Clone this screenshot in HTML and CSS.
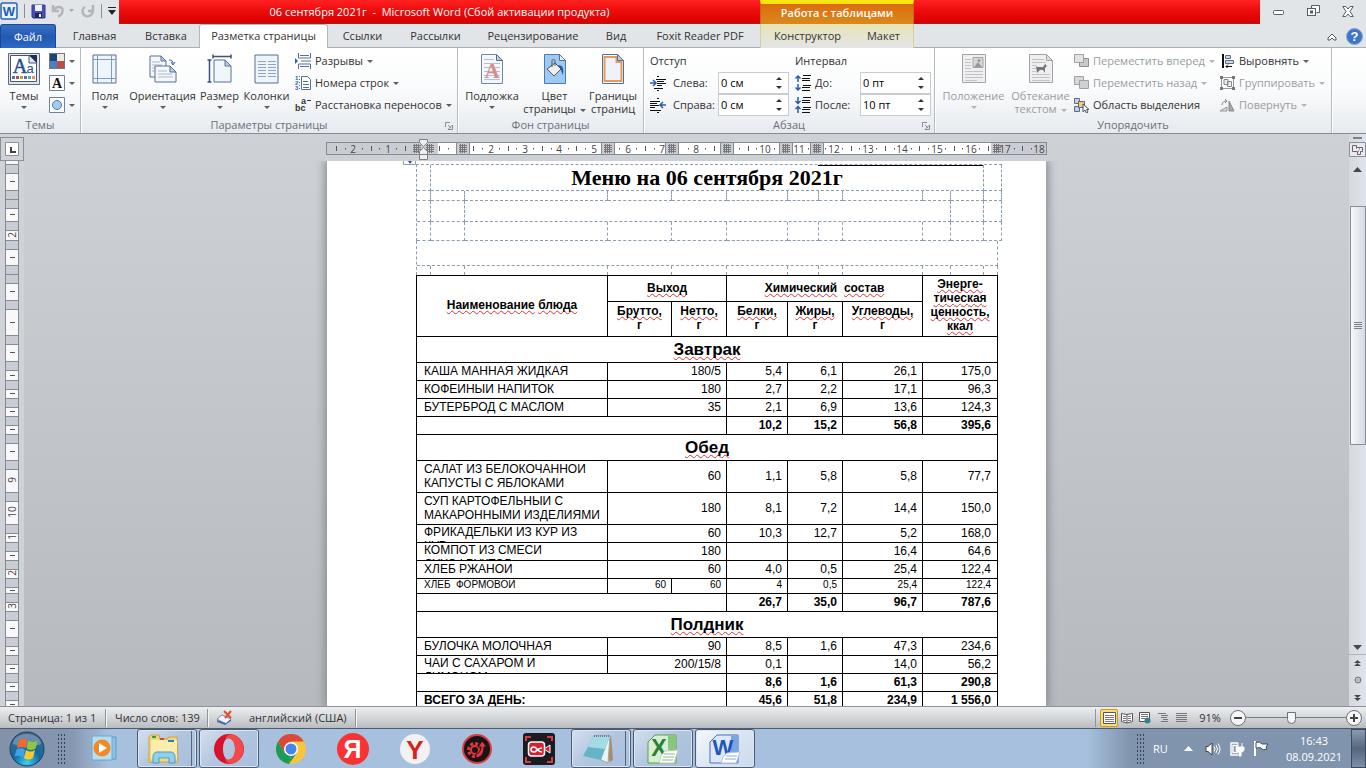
FILE: index.html
```
<!DOCTYPE html>
<html lang="ru">
<head>
  <meta charset="UTF-8">
  <meta name="viewport" content="width=device-width, initial-scale=1.0">
  <title>06 сентября 2021г - Microsoft Word</title>
  <link rel="stylesheet" href="styles.css">
</head>
<body>
  <header class="titlebar">
    <div class="quick">
      <svg width="18" height="18" viewBox="0 0 18 18"><rect x="1" y="1" width="16" height="16" rx="2" fill="#e8f1fb" stroke="#2b65ae" stroke-width="1.500"/><text class="glyph" x="9" y="14" font-size="13" fill="#1d5cb4">W</text></svg>
      <span class="bar"></span>
      <button class="tool" aria-label="Сохранить"><svg width="15" height="15" viewBox="0 0 15 15"><path d="M1 1h13v13H2l-1-1z" fill="#4a4fb5" stroke="#34398f"/><path d="M4 1h7v6H4z" fill="#eef2fb"/><path d="M4 9h7v5H4z" fill="#22265e"/><path d="M8 10h2v3H8z" fill="#fff"/></svg></button>
      <button class="tool" aria-label="Отменить"><svg width="24" height="14" viewBox="0 0 24 14"><path d="M2 1v6h6M3 6C5 2 12 2 11.500 6.500c0 3-2 5-4.500 6" fill="none" stroke="#b3b5b8" stroke-width="2.500"/><path d="M18 5h5l-2.500 3z" fill="#a5a7aa"/></svg></button>
      <button class="tool" aria-label="Повторить"><svg width="14" height="14" viewBox="0 0 14 14"><path d="M4 3a5 5 0 1 0 7 2M7 7h5V1" fill="none" stroke="#b3b5b8" stroke-width="2.500"/></svg></button>
      <span class="bar"></span>
      <button class="tool" aria-label="Настройка"><svg width="8" height="8" viewBox="0 0 8 8"><path d="M0 0h8v1H0zM0 3h8L4 8z" fill="#222"/></svg></button>
    </div>
    <div class="caption">06 сентября 2021г&nbsp; -&nbsp; Microsoft Word (Сбой активации продукта)</div>
    <div class="context-title">Работа с таблицами</div>
    <div class="caption-rest"></div>
    <div class="window-buttons">
      <button aria-label="Свернуть"><svg width="12" height="12" viewBox="0 0 12 12"><rect x=".5" y="5.500" width="10" height="4" rx="1" fill="#fff" stroke="#555d68"/></svg></button>
      <button aria-label="Развернуть"><svg width="13" height="12" viewBox="0 0 13 12"><path d="M4.500.5h8v7h-3M4.500.5v3" fill="#fff" stroke="#555d68"/><rect x=".5" y="3.500" width="8" height="7" fill="#fff" stroke="#555d68"/><rect x="3.500" y="6" width="2" height="2" fill="none" stroke="#555d68"/></svg></button>
      <button aria-label="Закрыть"><svg width="12" height="11" viewBox="0 0 12 11"><path d="M.8.500h3L6 3l2.200-2.500h3L8 5.500l3.200 5h-3L6 8l-2.200 2.500h-3L4 5.500z" fill="#fff" stroke="#555d68"/></svg></button>
    </div>
  </header>

  <nav class="tabs">
    <button class="file">Файл</button>
    <a href="#">Главная</a>
    <a href="#">Вставка</a>
    <a href="#" class="active">Разметка страницы</a>
    <a href="#">Ссылки</a>
    <a href="#">Рассылки</a>
    <a href="#">Рецензирование</a>
    <a href="#">Вид</a>
    <a href="#">Foxit Reader PDF</a>
    <a href="#" class="context first">Конструктор</a>
    <a href="#" class="context last">Макет</a>
    <div class="help">
      <svg width="10" height="8" viewBox="0 0 10 8"><path d="M1 5l4-4 4 4v2H7L5 5 3 7H1z" fill="#fff" stroke="#555"/></svg>
      <svg width="17" height="17" viewBox="0 0 17 17"><circle cx="8.500" cy="8.500" r="8" fill="#3d76c8" stroke="#8fa6c6"/><text class="glyph" x="8.500" y="13" font-size="13" fill="#fff">?</text></svg>
    </div>
  </nav>

  <section class="ribbon">
    <div class="group">
      <div class="tools themes">
        <button class="big">
          <svg width="32" height="32" viewBox="0 0 32 32"><path d="M.5.500h31v31H.500z" fill="#dfe6ee" stroke="#5d6b7c"/><path d="M2.500 2.500h26v26h-26z" fill="#fff" stroke="#46566d"/><path d="M21 2h8v8z" fill="#1c2f52"/><path d="M21 2v8h8z" fill="#dbe6f4" stroke="#46566d"/><text x="12" y="20" font-family="Liberation Serif" font-size="20" fill="#23508f" stroke="#23508f" stroke-width=".5" text-anchor="middle">A</text><text x="22" y="20" font-family="Liberation Sans" font-size="13" fill="#23508f" text-anchor="middle">a</text><path d="M4 23h3v3H4z" fill="#4675b5"/><path d="M8 23h3v3H8z" fill="#b84b48"/><path d="M12 23h3v3h-3z" fill="#93b050"/><path d="M16 23h3v3h-3z" fill="#7b60a0"/><path d="M20 23h3v3h-3z" fill="#47a9c2"/><path d="M24 23h3v3h-3z" fill="#ee9445"/></svg>
          <span>Темы</span><i class="arrow"></i>
        </button>
        <div class="stack">
          <button class="small" aria-label="Цвета"><svg width="16" height="16" viewBox="0 0 16 16"><path d="M0 0h16v16H0z" fill="#6b7889"/><path d="M1 1h7v7H1z" fill="#1f4379"/><path d="M8 1h7v7H8z" fill="#eeeade"/><path d="M1 8h7v7H1z" fill="#4c7fbe"/><path d="M8 8h7v7H8z" fill="#bd4b49"/></svg><i class="arrow"></i></button>
          <button class="small" aria-label="Шрифты"><svg width="16" height="16" viewBox="0 0 16 16"><path d="M.5.500h15v15H.500z" fill="#fff" stroke="#6f839b"/><text x="8" y="13" font-family="Liberation Serif" font-weight="bold" font-size="14" fill="#111" text-anchor="middle">A</text></svg><i class="arrow"></i></button>
          <button class="small" aria-label="Эффекты"><svg width="16" height="16" viewBox="0 0 16 16"><path d="M.5.500h15v15H.500z" fill="#fff" stroke="#6f839b"/><circle cx="8" cy="8" r="4.500" fill="#a9c8ee" stroke="#4c79b5"/></svg><i class="arrow"></i></button>
        </div>
      </div>
      <div class="group-name">Темы</div>
    </div>

    <div class="group">
      <div class="tools page-setup">
        <button class="big">
          <svg width="26" height="30" viewBox="0 0 26 30"><path d="M1 1h23v28H1z" fill="#eef4fb" stroke="#587090"/><path d="M5.500 1v28M19.500 1v28M1 5.500h23M1 24.500h23" stroke="#7e9cc4"/></svg>
          <span>Поля</span><i class="arrow"></i>
        </button>
        <button class="big">
          <svg width="28" height="30" viewBox="0 0 28 30"><path d="M1 2h11l5 5v16H1z" fill="#f4f8fd" stroke="#587090"/><path d="M3 8h8M3 11h10M3 14h10M3 17h10" stroke="#a9b8cc"/><path d="M12 2v5h5z" fill="#b9cde6" stroke="#587090"/><path d="M6 12h15l6 6v10H6z" fill="#f4f8fd" stroke="#587090"/><path d="M21 12v6h6z" fill="#b9cde6" stroke="#587090"/><path d="M9 17h9M9 20h14M9 23h15" stroke="#a9b8cc"/><path d="M20 6c3 0 4 1 4 4m-2-2l2 3 2-3" fill="none" stroke="#3b63a8"/></svg>
          <span>Ориентация</span><i class="arrow"></i>
        </button>
        <button class="big">
          <svg width="26" height="30" viewBox="0 0 26 30"><path d="M7 6h11l6 6v16H7z" fill="#f1f6fc" stroke="#587090"/><path d="M18 6v6h6z" fill="#b9cde6" stroke="#587090"/><path d="M6 2.500h18M6 .5v4M24 .5v4M2.500 6v22M.5 6h4M.5 28h4" stroke="#3c4f86" stroke-width="1.500"/></svg>
          <span>Размер</span><i class="arrow"></i>
        </button>
        <button class="big">
          <svg width="26" height="30" viewBox="0 0 26 30"><path d="M1 1h23v28H1z" fill="#eef4fb" stroke="#587090"/><path d="M4 7.500h8M4 10.500h8M4 13.500h8M4 16.500h8M4 19.500h8M4 22.500h8M14 7.500h8M14 10.500h8M14 13.500h8M14 16.500h8M14 19.500h8M14 22.500h8" stroke="#8ea6c6"/></svg>
          <span>Колонки</span><i class="arrow"></i>
        </button>
        <div class="stack">
          <button class="small"><svg width="16" height="16" viewBox="0 0 16 16"><path d="M3.500 0v5h12V0M3.500 16v-5h12v5" fill="#fff" stroke="#54709a"/><path d="M5 2.500h9M5 13.500h9M6 8h10" stroke="#54709a"/><path d="M0 5l3 3-3 3z" fill="#2a5cb0"/></svg>Разрывы<i class="arrow"></i></button>
          <button class="small"><svg width="16" height="16" viewBox="0 0 16 16"><path d="M6.500 1.500h6l3 3v10h-9z" fill="#fff" stroke="#54709a"/><path d="M8 6.500h5M8 9.500h6M8 12.500h6" stroke="#54709a"/><g font-family="Liberation Sans" font-weight="bold" font-size="6" fill="#2a5cb0"><text x="0" y="5">1</text><text x="0" y="10">2</text><text x="0" y="15">3</text></g><path d="M4.500 1v14" stroke="#54709a" stroke-dasharray="1 2"/></svg>Номера строк<i class="arrow"></i></button>
          <button class="small"><svg width="16" height="16" viewBox="0 0 16 16"><g font-family="Liberation Sans" font-weight="bold" font-size="9" fill="#333"><text x="0" y="14">bc</text><text x="6" y="7">a</text></g><path d="M12 3.500h4" stroke="#333"/></svg>Расстановка переносов<i class="arrow"></i></button>
        </div>
      </div>
      <div class="group-name">Параметры страницы<svg class="launcher" width="8" height="8" viewBox="0 0 8 8"><path d="M.5 5V.500H5M3 3l3 3M7.500 3v4.500H3z" fill="none" stroke="#8a8f96"/></svg></div>
    </div>

    <div class="group">
      <div class="tools page-back">
        <button class="big">
          <svg width="22" height="30" viewBox="0 0 22 30"><path d="M.5.500h15l6 6v23H.500z" fill="#f4f7fb" stroke="#7488a3"/><path d="M3 5.500h10M3 9.500h16M3 13.500h16M3 17.500h16M3 21.500h16M3 25.500h16" stroke="#b4bfce"/><path d="M15.500.5v6h6z" fill="#b9cde6" stroke="#587090"/><text x="11" y="24" font-family="Liberation Serif" font-weight="bold" font-size="21" fill="#d88c88" text-anchor="middle">A</text></svg>
          <span>Подложка</span><i class="arrow"></i>
        </button>
        <button class="big">
          <svg width="22" height="30" viewBox="0 0 22 30"><path d="M.5.500h15l6 6v23H.500z" fill="#9ccaf5" stroke="#4d7bb0"/><path d="M15.500.5v6h6z" fill="#e8f1fb" stroke="#587090"/><path d="M3 15l8-6 6 6-7 7z" fill="#eee" stroke="#555"/><path d="M8 13V7c0-2 3-2 3 0v5" fill="none" stroke="#555"/><path d="M14 11c5 0 6 4 5 10-1-2-2-4-2-6z" fill="#2258a5"/></svg>
          <span>Цвет</span><span>страницы<i class="arrow"></i></span>
        </button>
        <button class="big">
          <svg width="22" height="30" viewBox="0 0 22 30"><path d="M.5.500h15l6 6v23H.500z" fill="#fff" stroke="#587090"/><path d="M2.500 3h12v5h5v19h-17z" fill="#eef3fa" stroke="#e39a5c" stroke-width="2"/><path d="M15.500.5v6h6z" fill="#b9cde6" stroke="#587090"/></svg>
          <span>Границы</span><span>страниц</span>
        </button>
      </div>
      <div class="group-name">Фон страницы</div>
    </div>

    <div class="group">
      <div class="tools paragraph">
        <div class="fields">
          <h3>Отступ</h3>
          <div class="field">
            <svg width="16" height="15" viewBox="0 0 16 15"><path d="M7 .5h2M7 14.500h2M6 3.500h10M7 5.500h7M7 7.500h9M7 9.500h5M4 12.500h9" stroke="#111"/><path d="M0 7h5M3 4l3 3-3 3" fill="none" stroke="#2a5cb0" stroke-width="1.500"/></svg>
            <label for="left">Слева:</label>
            <span class="spin"><input type="text" id="left" value="0 см"><span class="steps"><button aria-label="Больше"></button><button aria-label="Меньше" class="down"></button></span></span>
          </div>
          <div class="field">
            <svg width="16" height="15" viewBox="0 0 16 15"><path d="M7 .5h2M7 14.500h2M0 3.500h10M0 5.500h7M0 7.500h9M0 9.500h5M0 12.500h11" stroke="#111"/><path d="M16 7h-5M13 4l-3 3 3 3" fill="none" stroke="#2a5cb0" stroke-width="1.500"/></svg>
            <label for="right">Справа:</label>
            <span class="spin"><input type="text" id="right" value="0 см"><span class="steps"><button aria-label="Больше"></button><button aria-label="Меньше" class="down"></button></span></span>
          </div>
        </div>
        <div class="fields interval">
          <h3>Интервал</h3>
          <div class="field">
            <svg width="16" height="16" viewBox="0 0 16 16"><path d="M8 .5h8M7 3.500h8M7 5.500h8M8 10.500h8M7 12.500h8M7 15.500h8" stroke="#111"/><path d="M3 7V1M.5 3.500L3 1l2.500 2.500M3 9v6M.5 12.500L3 15l2.500-2.500" fill="none" stroke="#2a5cb0" stroke-width="1.500"/></svg>
            <label for="before">До:</label>
            <span class="spin"><input type="text" id="before" value="0 пт"><span class="steps"><button aria-label="Больше"></button><button aria-label="Меньше" class="down"></button></span></span>
          </div>
          <div class="field">
            <svg width="16" height="16" viewBox="0 0 16 16"><path d="M8 .5h8M7 3.500h8M7 5.500h8M8 10.500h8M7 12.500h8M7 15.500h8" stroke="#111"/><path d="M3 0v6M.5 4L3 6.500 5.500 4M3 16v-6M.5 12L3 9.500 5.500 12" fill="none" stroke="#2a5cb0" stroke-width="1.500"/></svg>
            <label for="after">После:</label>
            <span class="spin"><input type="text" id="after" value="10 пт"><span class="steps"><button aria-label="Больше"></button><button aria-label="Меньше" class="down"></button></span></span>
          </div>
        </div>
      </div>
      <div class="group-name">Абзац<svg class="launcher" width="8" height="8" viewBox="0 0 8 8"><path d="M.5 5V.500H5M3 3l3 3M7.500 3v4.500H3z" fill="none" stroke="#8a8f96"/></svg></div>
    </div>

    <div class="group">
      <div class="tools arrange">
        <button class="big" disabled>
          <svg width="24" height="30" viewBox="0 0 24 30"><path d="M.5.500h23v28H.500z" fill="#efeff1" stroke="#a3a3a6"/><path d="M3 5.500h6M3 8.500h6M3 11.500h6M3 14.500h6M3 17.500h18M3 20.500h18M3 23.500h18M3 26.500h12" stroke="#c3c3c6"/><path d="M11 3.500h10v10H11z" fill="#d8d8da" stroke="#a3a3a6"/><path d="M12 13l4-5 4 5z" fill="#999"/><circle cx="17" cy="6.500" r="1.500" fill="#999"/></svg>
          <span>Положение</span><i class="arrow"></i>
        </button>
        <button class="big" disabled>
          <svg width="24" height="30" viewBox="0 0 24 30"><path d="M.5.500h17l6 6v22H.500z" fill="#efeff1" stroke="#a3a3a6"/><path d="M17.500.5v6h6z" fill="#ddd" stroke="#a3a3a6"/><path d="M3 5.500h12M3 8.500h14M3 11.500h4M3 14.500h4M3 17.500h4M3 20.500h18M3 23.500h18M3 26.500h18" stroke="#c3c3c6"/><path d="M7 12l2 1h5l2-3 2 2-2 2v5l-2-3h-3l-3 3z" fill="#777"/></svg>
          <span>Обтекание</span><span>текстом<i class="arrow"></i></span>
        </button>
        <div class="stack">
          <button class="small" disabled><svg width="15" height="14" viewBox="0 0 15 14"><path d="M5.500 4.500h9v8h-9z" fill="#c9c9cb" stroke="#8f8f92"/><path d="M.5.500h9v8h-9z" fill="#e3e3e5" stroke="#a0a0a3"/></svg>Переместить вперед<i class="arrow"></i></button>
          <button class="small" disabled><svg width="15" height="14" viewBox="0 0 15 14"><path d="M.5.500h9v8h-9z" fill="#d8d8da" stroke="#a0a0a3"/><path d="M5.500 4.500h9v8h-9z" fill="#d0d0d2" stroke="#a0a0a3"/></svg>Переместить назад<i class="arrow"></i></button>
          <button class="small"><svg width="15" height="15" viewBox="0 0 15 15"><path d="M.5.500h5v5h-5zM.5 8.500h5v5h-5z" fill="#c5cfdd" stroke="#5c6c80"/><path d="M4.500 3.500h6v6h-6z" fill="#f9c86b" stroke="#5c6c80"/><path d="M9 6v8l2-2 1.500 3 1.500-1-1.500-2.500H15z" fill="#fff" stroke="#456"/></svg>Область выделения</button>
        </div>
        <div class="stack">
          <button class="small"><svg width="15" height="14" viewBox="0 0 15 14"><path d="M3 0v14" stroke="#111" stroke-width="2"/><path d="M5.500 1.500h5v3h-5z" fill="#cfdae8" stroke="#5c6c80"/><path d="M5.500 6.500h8v3h-8z" fill="#cfdae8" stroke="#5c6c80"/><path d="M6 12.500h6M8 10.500l-2 2 2 2" fill="none" stroke="#111"/></svg>Выровнять<i class="arrow"></i></button>
          <button class="small" disabled><svg width="15" height="14" viewBox="0 0 15 14"><path d="M1.500 1.500h12v11h-12z" fill="none" stroke="#999"/><path d="M4 3.500h4v5H4zM7.500 5.500h4v5h-4z" fill="#eee" stroke="#888"/><path d="M0 0h3v3H0zM12 0h3v3h-3zM0 11h3v3H0zM12 11h3v3h-3z" fill="#777"/></svg>Группировать<i class="arrow"></i></button>
          <button class="small" disabled><svg width="15" height="14" viewBox="0 0 15 14"><path d="M0 13h7V9z" fill="#ddd" stroke="#999"/><path d="M9 13V3l5 10z" fill="#aaa" stroke="#888"/><path d="M2 7c0-3 2-4 5-4M5 1l2 2-2 2" fill="none" stroke="#888"/></svg>Повернуть<i class="arrow"></i></button>
        </div>
      </div>
      <div class="group-name">Упорядочить</div>
    </div>
  </section>

  <main class="workspace">
    <div class="left-rail">
      <button class="tab-stop" aria-label="Табуляция"><svg width="14" height="14" viewBox="0 0 14 14"><path d="M.5.500h13v13H.500z" fill="#fff" stroke="#8a9098"/><path d="M6 5v5h5" fill="none" stroke="#444" stroke-width="2"/></svg></button>
      <svg id="vruler" width="24" height="560"></svg>
    </div>
    <div class="canvas">
      <div class="ruler-strip"><svg id="hruler" width="721" height="24"></svg></div>
      <article class="sheet">
        <svg class="anchor" width="13" height="4" viewBox="0 0 13 4"><path d="M.5 0v3.500h12V0" fill="#fff" stroke="#999"/><path d="M5 0h4L7 3z" fill="#2d4f9e"/></svg>
        <table class="guides wide">
          <colgroup><col class="g14"><col class="g34"><col class="g143"><col class="g64"><col class="g55"><col class="g61"><col class="g31"><col class="g24"><col class="g80"><col class="g28"><col class="g33"><col class="g18"></colgroup>
          <tr class="h26"><td></td><td colspan="10" class="menu-title"><h1>Меню на 06 сентября 2021г</h1></td><td></td></tr>
          <tr class="h10"><td></td><td></td><td></td><td></td><td></td><td></td><td></td><td></td><td></td><td></td><td></td><td></td></tr>
          <tr class="h21"><td></td><td></td><td colspan="8"></td><td></td><td></td></tr>
          <tr class="h19"><td></td><td></td><td></td><td></td><td></td><td></td><td></td><td></td><td></td><td></td><td></td><td></td></tr>
        </table>
        <table class="guides">
          <colgroup><col class="g14"><col class="g34"><col class="g143"><col class="g64"><col class="g55"><col class="g61"><col class="g31"><col class="g24"><col class="g80"><col class="g28"><col class="g33"><col class="g14"></colgroup>
          <tr class="h25"><td colspan="12"></td></tr>
          <tr class="h9"><td></td><td></td><td></td><td></td><td></td><td></td><td></td><td></td><td></td><td></td><td></td><td></td></tr>
        </table>
        <table class="menu">
          <colgroup><col class="g191"><col class="g64"><col class="g55"><col class="g61"><col class="g55"><col class="g80"><col class="g75"></colgroup>
          <thead>
            <tr class="h26"><th rowspan="2"><u>Наименование</u> <u>блюда</u></th><th colspan="2"><u>Выход</u></th><th colspan="3"><u>Химический</u>&nbsp; <u>состав</u></th><th rowspan="2"><u>Энерге-</u><br><u>тическая</u><br><u>ценность,</u><br><u>ккал</u></th></tr>
            <tr class="h35"><th><u>Брутто,</u><br>г</th><th><u>Нетто,</u><br>г</th><th><u>Белки,</u><br>г</th><th><u>Жиры,</u><br>г</th><th><u>Углеводы,</u><br>г</th></tr>
          </thead>
          <tbody>
            <tr class="meal"><th colspan="7"><u>Завтрак</u></th></tr>
            <tr><td><div class="dish">КАША МАННАЯ ЖИДКАЯ</div></td><td colspan="2">180/5</td><td>5,4</td><td>6,1</td><td>26,1</td><td>175,0</td></tr>
            <tr><td><div class="dish">КОФЕЙНЫЙ НАПИТОК</div></td><td colspan="2">180</td><td>2,7</td><td>2,2</td><td>17,1</td><td>96,3</td></tr>
            <tr><td><div class="dish">БУТЕРБРОД С МАСЛОМ</div></td><td colspan="2">35</td><td>2,1</td><td>6,9</td><td>13,6</td><td>124,3</td></tr>
            <tr class="sum"><td colspan="3"></td><td>10,2</td><td>15,2</td><td>56,8</td><td>395,6</td></tr>
            <tr class="meal"><th colspan="7"><u>Обед</u></th></tr>
            <tr class="h32"><td><div class="dish">САЛАТ ИЗ БЕЛОКОЧАННОЙ<br>КАПУСТЫ С ЯБЛОКАМИ</div></td><td colspan="2">60</td><td>1,1</td><td>5,8</td><td>5,8</td><td>77,7</td></tr>
            <tr class="h32"><td><div class="dish">СУП КАРТОФЕЛЬНЫЙ С<br>МАКАРОННЫМИ ИЗДЕЛИЯМИ</div></td><td colspan="2">180</td><td>8,1</td><td>7,2</td><td>14,4</td><td>150,0</td></tr>
            <tr><td><div class="dish cut">ФРИКАДЕЛЬКИ ИЗ КУР ИЗ<br>КУР</div></td><td colspan="2">60</td><td>10,3</td><td>12,7</td><td>5,2</td><td>168,0</td></tr>
            <tr><td><div class="dish cut">КОМПОТ ИЗ СМЕСИ<br>СУХОФРУКТОВ</div></td><td colspan="2">180</td><td></td><td></td><td>16,4</td><td>64,6</td></tr>
            <tr><td><div class="dish">ХЛЕБ РЖАНОЙ</div></td><td colspan="2">60</td><td>4,0</td><td>0,5</td><td>25,4</td><td>122,4</td></tr>
            <tr class="fine"><td><div class="dish">ХЛЕБ&nbsp; ФОРМОВОЙ</div></td><td>60</td><td>60</td><td>4</td><td>0,5</td><td>25,4</td><td>122,4</td></tr>
            <tr class="sum"><td colspan="3"></td><td>26,7</td><td>35,0</td><td>96,7</td><td>787,6</td></tr>
            <tr class="meal"><th colspan="7"><u>Полдник</u></th></tr>
            <tr><td><div class="dish">БУЛОЧКА МОЛОЧНАЯ</div></td><td colspan="2">90</td><td>8,5</td><td>1,6</td><td>47,3</td><td>234,6</td></tr>
            <tr><td><div class="dish cut">ЧАЙ С САХАРОМ И<br>ЛИМОНОМ</div></td><td colspan="2">200/15/8</td><td>0,1</td><td></td><td>14,0</td><td>56,2</td></tr>
            <tr class="sum"><td colspan="3"></td><td>8,6</td><td>1,6</td><td>61,3</td><td>290,8</td></tr>
            <tr class="sum"><td colspan="3">ВСЕГО ЗА ДЕНЬ:</td><td>45,6</td><td>51,8</td><td>234,9</td><td>1 556,0</td></tr>
          </tbody>
        </table>
      </article>
    </div>
    <div class="scrollbar">
      <svg width="17" height="26" viewBox="0 0 17 26"><path d="M4 1h9v2H4z" fill="#7c8188"/><path d="M.5 6.500h16v14H.500z" fill="#e6eaf0" stroke="#8a9098"/><path d="M3.500 9.500h4v2h6v4h-2v3h-3v-3h-5z" fill="#f3e9ee" stroke="#666"/><path d="M7 12h1M10 13h1M9 15h1" stroke="#555"/></svg>
      <button aria-label="Вверх"><svg width="9" height="5" viewBox="0 0 9 5"><path d="M0 5h9L4.500 0z" fill="#45494f"/></svg></button>
      <div class="track"><div class="thumb"></div></div>
      <button aria-label="Вниз"><svg width="9" height="5" viewBox="0 0 9 5"><path d="M0 0h9L4.500 5z" fill="#45494f"/></svg></button>
      <div class="browse">
        <svg width="7" height="7" viewBox="0 0 7 7"><path d="M3.500 0L7 3H0zM3.500 3L7 6H0z" fill="#45494f"/></svg>
        <svg width="8" height="8" viewBox="0 0 8 8"><circle cx="4" cy="4" r="3" fill="#bbb" stroke="#777"/></svg>
        <svg width="7" height="7" viewBox="0 0 7 7"><path d="M0 1h7L3.500 4zM0 4h7L3.500 7z" fill="#45494f"/></svg>
      </div>
    </div>
  </main>

  <footer class="status">
    <span class="pages">Страница: 1 из 1</span>
    <span class="words">Число слов: 139</span>
    <span class="lang"><svg width="17" height="15" viewBox="0 0 17 15"><path d="M1 9l5-4 9 4-5 5z" fill="#f3f6fb" stroke="#7c8fb0"/><path d="M1 10v2l8 3 6-4V9l-5 4z" fill="#4b6fb5"/><path d="M8 1l7 7M15 1L9 8" stroke="#e2512e" stroke-width="2"/></svg>английский (США)</span>
    <div class="views">
      <button class="on" aria-label="Разметка"><svg width="13" height="12" viewBox="0 0 13 12"><path d="M.5.500h12v11H.500z" fill="#fff" stroke="#555"/><path d="M2 3.500h9M2 5.500h9M2 7.500h9M2 9.500h9" stroke="#777"/></svg></button>
      <button aria-label="Чтение"><svg width="12" height="12" viewBox="0 0 12 12"><path d="M.5 1.500L6 2.500l5.500-1v8L6 11 .5 9.500zM6 2v9" fill="#fff" stroke="#555"/><path d="M2 4.500h3M2 6.500h3M2 8.500h3M7 4.500h3M7 6.500h3M7 8.500h3" stroke="#777"/></svg></button>
      <button aria-label="Веб"><svg width="12" height="12" viewBox="0 0 12 12"><path d="M.5.500h10v9H.500z" fill="#fff" stroke="#555"/><path d="M2 2.500h7M2 4.500h7M2 6.500h4" stroke="#777"/><circle cx="8.500" cy="8.500" r="3" fill="#3c7d8d"/></svg></button>
      <button aria-label="Структура"><svg width="10" height="10" viewBox="0 0 10 10"><path d="M0 .5h8M3 2.500h7M3 4.500h6M5 6.500h5M3 8.500h7" stroke="#777"/></svg></button>
      <button aria-label="Черновик"><svg width="11" height="10" viewBox="0 0 11 10"><path d="M0 .5h11M0 2.500h11M0 4.500h11M0 6.500h11M0 8.500h11" stroke="#777"/></svg></button>
    </div>
    <label class="percent" for="zoom">91%</label>
    <button class="round" aria-label="Уменьшить"></button>
    <input type="range" id="zoom" min="10" max="190" value="91">
    <button class="round plus" aria-label="Увеличить"></button>
  </footer>

  <div class="taskbar">
    <button class="start" aria-label="Пуск"><svg width="36" height="36" viewBox="0 0 36 36"><defs><radialGradient id="orb" cx=".5" cy=".9" r=".9"><stop offset="0" stop-color="#35d2f7"/><stop offset=".45" stop-color="#14689e"/><stop offset="1" stop-color="#47698c"/></radialGradient></defs><circle cx="18" cy="18" r="17" fill="url(#orb)" stroke="#1d3c5c"/><path d="M4 13a14 10 0 0 1 28 0c-9 4-19 4-28 0z" fill="#fff" opacity=".25"/><path d="M10 9c3-2 6-2 8.500 0l-2 8c-3-1-6-1-8.500 0z" fill="#ef6a2e"/><path d="M19.500 9.500c3 2 6 2 9 0l-2 8c-3 2-6 2-9 0z" fill="#8fc640"/><path d="M7.500 18.500c3-2 6-1 8.500 0l-2 8c-3-2-6-2-8.500-1z" fill="#3fa2e8"/><path d="M17 19c3 2 6 2 9 0l-2 8c-3 2-6 2-9 0z" fill="#fcc531"/></svg></button>
    <div class="grip"></div>
    <div class="apps">
      <button class="app" aria-label="Media Player"><svg width="28" height="28" viewBox="0 0 28 28"><path d="M8 2h17v22l-17 1z" fill="#8cc3e4" stroke="#5a9dc8"/><path d="M1 1h20v24H1z" fill="#b9ddf0" stroke="#6aaace"/><circle cx="11" cy="13" r="8.500" fill="#f18a24"/><path d="M8 8l8 5-8 5z" fill="#fff"/></svg></button>
      <button class="app open multi" aria-label="Проводник"><svg width="34" height="30" viewBox="0 0 34 30"><path d="M2 3l2-2h8l1 4h8v-2h9l1 25H2z" fill="#f1d774" stroke="#c9a643"/><path d="M4 6h26v19H4z" fill="#fbedab"/><path d="M5 2h4v2H5z" fill="#35a04a"/><path d="M13 4h4v2h-4z" fill="#cc4b30"/><path d="M21 6h6v2h-6z" fill="#3678b8"/><path d="M6 29v-6c0-4 2-5 5-5h12c4 0 5 2 5 5v6h-6v-5H12v5z" fill="#8fd0ed" stroke="#4a9dc8"/></svg></button>
      <button class="app open" aria-label="Opera"><svg width="32" height="32" viewBox="0 0 32 32"><path fill-rule="evenodd" d="M16 1a15 15 0 1 0 0 30 15 15 0 1 0 0-30zM16 5c4 0 6 5 6 11s-2 11-6 11-6-5-6-11 2-11 6-11z" fill="#d9112a"/><path fill-rule="evenodd" d="M18 1.200A15 15 0 0 1 18 30.800c-3 0-5-2-6-5 2 2 10 1 10-9.800S14 4.200 12 6.200c1-3 3-5 6-5z" fill="#f4494b"/></svg></button>
      <button class="app" aria-label="Chrome"><svg width="30" height="30" viewBox="0 0 30 30"><circle cx="15" cy="15" r="15" fill="#f6c63f"/><path d="M2 7.500a15 15 0 0 1 26 0H15l-6.500 11z" fill="#d9483b"/><path d="M2 7.500L8.500 18.500 15 22l-2 8A15 15 0 0 1 2 7.500z" fill="#1c9a57"/><path d="M13 30L21 18.500 15 22z" fill="#1c9a57"/><circle cx="15" cy="15" r="7" fill="#fff"/><circle cx="15" cy="15" r="5.500" fill="#4484ee"/></svg></button>
      <button class="app" aria-label="Яндекс"><svg width="32" height="32" viewBox="0 0 32 32"><circle cx="16" cy="16" r="16" fill="#fb3232"/><text class="glyph" x="15.500" y="25" font-size="25" fill="#fff">Я</text></svg></button>
      <button class="app" aria-label="Яндекс.Браузер"><svg width="30" height="30" viewBox="0 0 30 30"><circle cx="15" cy="15" r="15" fill="#f3f1f1"/><text class="glyph" x="15" y="25" font-size="26" fill="#d8211f">Y</text></svg></button>
      <button class="app" aria-label="Booster"><svg width="30" height="30" viewBox="0 0 30 30"><circle cx="15" cy="15" r="14" fill="#191517" stroke="#dd3a40" stroke-width="2"/><circle cx="13" cy="16" r="4" fill="none" stroke="#e3353b" stroke-width="2"/><circle cx="13" cy="16" r="6.500" fill="none" stroke="#e3353b" stroke-width="3" stroke-dasharray="3 2"/><path d="M14 24c6-1 8-5 8-11h3l-5-6-4 6h3c0 4-2 6-5 7z" fill="#e3353b" stroke="#191517"/></svg></button>
      <button class="app" aria-label="Запись экрана"><svg width="32" height="32" viewBox="0 0 32 32"><rect width="32" height="32" rx="3" fill="#1b1c21"/><path d="M3 8V4h5M24 4h5v4M3 24v5h5M24 29h5v-5" fill="none" stroke="#d93b42" stroke-width="2"/><rect x="5.500" y="9" width="16" height="14" rx="3" fill="#d62135" stroke="#fff" stroke-width="1.500"/><path d="M21 16l6-4v8z" fill="#d62135" stroke="#fff"/><path d="M19 19c-5 0-5-5-8-5-4 0-4 5 0 5 3 0 3-4 8-4" fill="none" stroke="#fff" stroke-width="1.500"/></svg></button>
      <button class="app open multi" aria-label="Блокнот"><svg width="32" height="30" viewBox="0 0 32 30"><path d="M12 2h17l2 24-3 2z" fill="#a98d62"/><path d="M12 2h16l-2 27-7-3z" fill="#edf3f4" stroke="#98a9ac"/><path d="M12 2h16L19 26 1 22z" fill="#65b5c9"/><path d="M12 2h16l-5 13L6 13z" fill="#a5dbe5"/><path d="M12 2h16" stroke="#6c7c80" stroke-width="2" stroke-dasharray="1 1"/></svg></button>
      <button class="app open" aria-label="Excel"><svg width="32" height="30" viewBox="0 0 32 30"><path d="M8 1h21v28H1V8z" fill="#d9efd2" stroke="#54a24f"/><path d="M21 1h8v28h-8z" fill="#86c77b"/><text class="glyph" x="12" y="22" font-size="23" fill="#258236">X</text><path d="M14 22l4-5 13-1-4 13H12z" fill="#fff" stroke="#bcd2b8"/><path d="M17 20h11M16 23h11M15 26h11" stroke="#8bb88a"/></svg></button>
      <button class="app open current" aria-label="Word"><svg width="32" height="30" viewBox="0 0 32 30"><path d="M8 1h21v28H1V8z" fill="#dce9f9" stroke="#4671b8"/><path d="M22 1h7v28h-7z" fill="#7ca4e3"/><text class="glyph" x="14" y="21" font-size="22" fill="#1e57b6">W</text><path d="M14 23l4-4 13-1-4 11H12z" fill="#fff" stroke="#b5c6e0"/><path d="M17 22h11M16 25h11" stroke="#8ea9d2"/></svg></button>
    </div>
    <div class="tray">
      <div class="grip"></div>
      <span class="kbd">RU</span>
      <svg width="9" height="5" viewBox="0 0 9 5"><path d="M0 5h9L4.500 0z" fill="#fff"/></svg>
      <svg width="20" height="14" viewBox="0 0 20 14"><path d="M5 4.500h2L11 1v12L7 9.500H5z" fill="#fff" stroke="#444"/><path d="M13 4.500q2 2.500 0 5M15 3q3 4 0 8M17 1.500q4 5.500 0 11" fill="none" stroke="#fff"/></svg>
      <svg width="16" height="16" viewBox="0 0 16 16"><path d="M9 2H2v12h7M4 4.500h4v7H4z" fill="none" stroke="#fff" stroke-width="1.500"/><path d="M7 6h8v2c0 3-2 3-3 3v4h-2v-4c-2 0-3-1-3-3zM9 2v4M13 2v4" fill="#fff" stroke="#fff"/></svg>
      <svg width="16" height="15" viewBox="0 0 16 15"><path d="M1 0h2v15H1z" fill="#fff"/><path d="M3 1.500c3-1 4 0 6 1.500h6l-2 3 1 2c-3 1-5 1-6-1-2-1-3 0-5 0z" fill="#fff" stroke="#3c4a5c"/></svg>
      <div class="clock"><span>16:43</span><span>08.09.2021</span></div>
      <button class="desktop" aria-label="Показать рабочий стол"></button>
    </div>
  </div>

  <script>
    // horizontal ruler: 1 cm is 34.3 px at this zoom, zero sits 96 px from the left edge
    const colStops = [130, 275, 339, 394, 453, 484];
    let h = '<rect x="0.5" y="5.500" width="720" height="12" fill="#c9cdd3" stroke="#858b93"/><rect x="112" y="6" width="553" height="11" fill="#fff"/>';
    for (let q = -11; q <= 72; q++) {
      const x = Math.round(96 + q * 34.3 / 4);
      const n = Math.abs(q / 4);
      if (x < 3 || Math.abs(x - 96) < 14 || colStops.some(s => Math.abs(x - s - 7) < 8)) continue;
      if (q % 4 === 0) h += `<text x="${x}" y="16">${n}</text>`;
      else if (q % 2 === 0) h += `<path d="M${x}.5 9v5"/>`;
      else h += `<path d="M${x}.5 11v1.500"/>`;
    }
    const hatch = x => `<path class="hatch" d="M${x} 8.500h8M${x} 10.500h8M${x} 12.500h8M${x} 14.500h8M${x + 1.5} 7v9M${x + 3.5} 7v9M${x + 5.5} 7v9"/>`;
    colStops.forEach(s => h += `<rect x="${s}.5" y="5.500" width="13" height="12" fill="#c9cdd3" stroke="#858b93"/>` + hatch(s + 3));
    h += hatch(87) + hatch(100) + hatch(667) + '<path class="indent" d="M93.500 2.500h8v3l-4 4-4-4zM93.500 17.500v-3l4-4 4 4v3zM93.500 17.500h8v5h-8z"/>';
    document.getElementById('hruler').innerHTML = h;

    // vertical ruler: a grey stop at every row edge, white between
    const rows = [3, 29, 38, 60, 79, 104, 113, 139, 174, 200, 219, 237, 255, 273, 299, 331, 363, 381, 399, 417, 432, 450, 476, 494, 512, 530];
    const nums = { 60: '2', 299: '9', 331: '10', 363: '1', 399: '2', 432: '3' };
    let v = '<rect x="5.500" y="-1" width="13" height="600" fill="#f8f8f9" stroke="#858b93"/>';
    rows.forEach((y, i) => {
      v += `<rect x="5.500" y="${y}.5" width="13" height="9" fill="#c9cdd3" stroke="#858b93"/>`;
      const gap = (rows[i + 1] || 548) - y - 9;
      const mid = y + 9 + Math.floor(gap / 2);
      if (gap < 5) return;
      if (nums[y]) v += `<text transform="translate(16 ${mid}) rotate(-90)">${nums[y]}</text>`;
      else v += `<path d="M10 ${mid}.5h5"/>`;
    });
    document.getElementById('vruler').innerHTML = v;
  </script>
</body>
</html>
```
FILE: styles.css
```
* {
  box-sizing: border-box;
}
body {
  margin: 0;
  height: 100vh;
  display: flex;
  flex-direction: column;
  overflow: hidden;
  font-family: "Open Sans", "Noto Sans", sans-serif;
  font-size: 11px;
  line-height: 16px;
  color: #333;
  background: #e2e5e8;
}
button {
  font: inherit;
  color: inherit;
  background: none;
  border: none;
  padding: 0;
}
a {
  color: inherit;
  text-decoration: none;
}
svg {
  display: block;
  flex: none;
}
.glyph {
  font-family: "Liberation Sans", Arial, sans-serif;
  font-weight: bold;
  text-anchor: middle;
}

/* title bar */
.titlebar {
  display: flex;
  height: 24px;
  flex: none;
}
.quick {
  width: 119px;
  display: flex;
  align-items: center;
  justify-content: space-between;
  padding: 0 3px 2px 0;
}
.quick .bar {
  width: 1px;
  height: 14px;
  background: #8b8f95;
}
.tool {
  display: flex;
}
.caption,
.caption-rest {
  background: linear-gradient(#ff2222, #ee0c0c 45%, #d90000);
  border-bottom: 1px solid #9c2020;
}
.caption {
  width: 641px;
  text-align: center;
  color: #fff;
  line-height: 24px;
  white-space: nowrap;
}
.context-title {
  width: 154px;
  border: 1px solid #c8641c;
  border-top: 4px solid #fbe510;
  border-bottom: none;
  background: linear-gradient(#dd6b0e, #d98a1c);
  color: #fff;
  font-weight: 600;
  line-height: 18px;
  text-align: center;
}
.caption-rest {
  flex: 1;
}
.window-buttons {
  width: 106px;
  display: flex;
  align-items: center;
  justify-content: space-between;
  padding: 0 12px 2px 13px;
}

/* tabs */
.tabs {
  display: grid;
  grid-template-columns: 56px 77px 66px 129px 69px 77px 118px 48px 120px 94px 60px 1fr;
  height: 24px;
  flex: none;
  border-bottom: 1px solid #a9aeb5;
  text-align: center;
  line-height: 24px;
  white-space: nowrap;
}
.file {
  border-radius: 3px 3px 0 0;
  border: 1px solid #1c4a92;
  border-bottom: none;
  background: linear-gradient(#3a72c6, #2258b0 50%, #2e6bc9);
  color: #fff;
}
.tabs .active {
  background: #fff;
  border: 1px solid #b4b8be;
  border-bottom: none;
  border-radius: 3px 3px 0 0;
  height: 24px;
  line-height: 22px;
}
.context {
  background: linear-gradient(#e9e4b5, #e2e5e8);
}
.context.first {
  border-left: 1px solid #d6cf9a;
}
.context.last {
  border-right: 1px solid #d6cf9a;
}
.help {
  display: flex;
  justify-content: flex-end;
  align-items: center;
  gap: 9px;
  padding-right: 3px;
}

/* ribbon */
.ribbon {
  display: grid;
  grid-template-columns: 81px 377px 186px 291px 397px 1fr;
  height: 86px;
  flex: none;
  background: linear-gradient(#fff, #fafbfc 50%, #e6eaef);
  border-bottom: 1px solid #878c93;
  white-space: nowrap;
}
.group {
  display: flex;
  flex-direction: column;
  border-right: 1px solid #b8bcc2;
  box-shadow: 1px 0 #fff;
  min-width: 0;
}
.group-name {
  position: relative;
  text-align: center;
  color: #6b7078;
  line-height: 16px;
}
.launcher {
  position: absolute;
  right: 4px;
  top: 5px;
}
.tools {
  display: grid;
  height: 69px;
}
.themes {
  grid-template-columns: 48px 1fr;
}
.page-setup {
  grid-template-columns: 48px 67px 47px 47px 1fr;
}
.page-back {
  grid-template-columns: 68px 57px 60px;
}
.paragraph {
  grid-template-columns: 149px 1fr;
}
.arrange {
  grid-template-columns: 77px 57px 146px 1fr;
}
.big {
  display: flex;
  flex-direction: column;
  align-items: center;
  padding-top: 5px;
  line-height: 13px;
  min-width: 0;
}
.big svg {
  height: 32px;
  margin-bottom: 4px;
}
.big > .arrow {
  margin: 4px 0 0;
}
.arrow {
  display: inline-block;
  flex: none;
  border: 3px solid transparent;
  border-top-color: #5a5f66;
  border-bottom: none;
  margin-left: 4px;
  vertical-align: middle;
}
.stack {
  display: flex;
  flex-direction: column;
  padding: 2px 0 0 5px;
}
.small {
  display: flex;
  align-items: center;
  height: 22px;
}
.small svg {
  margin-right: 4px;
}
.themes .stack {
  padding-left: 1px;
}
.themes .small svg {
  margin-right: 0;
}
button:disabled {
  color: #9a9ca0;
}
button:disabled .arrow {
  border-top-color: #b0b2b5;
}
.fields {
  padding: 2px 0 0 6px;
}
.fields h3 {
  margin: 0;
  font-size: 11px;
  font-weight: normal;
  line-height: 22px;
}
.field {
  display: grid;
  grid-template-columns: 23px 45px 71px;
  align-items: center;
  height: 22px;
}
.interval {
  padding-left: 2px;
}
.interval .field {
  grid-template-columns: 20px 45px 71px;
}
.spin {
  display: flex;
  height: 22px;
  border: 1px solid #c8ccd1;
  background: #fff;
}
.spin input {
  width: 57px;
  border: none;
  padding: 0 2px;
  font: inherit;
  color: #000;
  background: none;
}
.steps {
  display: flex;
  flex-direction: column;
  justify-content: center;
  gap: 6px;
}
.steps button {
  border: 3px solid transparent;
  border-top: none;
  border-bottom: 3px solid #333;
}
.steps .down {
  border-top: 3px solid #333;
  border-bottom: none;
}

/* document area */
.workspace {
  flex: 1;
  min-height: 0;
  display: grid;
  grid-template-columns: 24px 1fr 17px;
  background: linear-gradient(#ced1d6, #b6b9bd);
  border-bottom: 1px solid #8c9299;
  overflow: hidden;
}
.left-rail {
  background: #cfd3d8;
  padding-top: 3px;
  min-height: 0;
  overflow: hidden;
}
.tab-stop {
  display: grid;
  place-items: center;
  width: 24px;
  height: 24px;
  border: 1px solid #8a9098;
}
.canvas {
  display: flex;
  flex-direction: column;
  align-items: center;
  min-height: 0;
  overflow: hidden;
}
.ruler-strip {
  height: 27px;
  padding-top: 3px;
  flex: none;
}
#hruler,
#vruler {
  font: 10px "Open Sans", sans-serif;
  fill: #444;
  text-anchor: middle;
}
#hruler path,
#vruler path {
  stroke: #555;
}
#hruler .hatch {
  stroke: #777;
}
#hruler .indent {
  fill: #eceef0;
  stroke: #7c8289;
}
.sheet {
  position: relative;
  width: 719px;
  flex: 1;
  min-height: 0;
  padding: 3px 0 0 89px;
  background: #fff;
  box-shadow: 0 0 9px 2px #85898e;
  clip-path: inset(0 -12px 0 -12px);
  overflow: hidden;
  color: #000;
  font: 12px/14px "Liberation Sans", Arial, sans-serif;
}
.anchor {
  position: absolute;
  left: 76px;
  top: 0;
}
table {
  table-layout: fixed;
  width: 582px;
  border-collapse: separate;
  border-spacing: 0;
}
td,
th {
  padding: 0;
  border: 0 solid #000;
  border-width: 0 1px 1px 0;
}
.guides {
  border-left: 1px dashed #8b9db0;
  font-size: 0;
  line-height: 0;
}
.guides.wide {
  width: 586px;
  border-top: 1px dashed #8b9db0;
}
.guides td {
  border-color: #8b9db0;
  border-style: dashed;
}
.guides .h9 td {
  border-bottom: none;
}
.guides .menu-title {
  background: linear-gradient(#000, #000) top right / 165px 1px no-repeat;
}
h1 {
  margin: 0;
  font: bold 22px/24px "Liberation Serif", "Times New Roman", serif;
  text-align: center;
}
.g14 { width: 14px; }
.g18 { width: 18px; }
.g24 { width: 24px; }
.g28 { width: 28px; }
.g31 { width: 31px; }
.g33 { width: 33px; }
.g34 { width: 34px; }
.g55 { width: 55px; }
.g61 { width: 61px; }
.g64 { width: 64px; }
.g75 { width: 75px; }
.g80 { width: 80px; }
.g143 { width: 143px; }
.g191 { width: 191px; }
.menu {
  border: solid #000;
  border-width: 1px 0 0 1px;
}
.menu tr {
  height: 18px;
}
.menu th {
  padding-bottom: 2px;
}
.menu td {
  text-align: right;
  padding: 0 5px 2px 0;
}
.menu td:last-child {
  padding-right: 6px;
}
.menu td:first-child {
  text-align: left;
  padding: 0 0 2px 7px;
}
tr.h9 { height: 9px; }
tr.h10 { height: 10px; }
tr.h19 { height: 19px; }
tr.h21 { height: 21px; }
tr.h25 { height: 25px; }
.guides tr.h26,
.menu tr.h26 { height: 26px; }
.menu tr.h32 { height: 32px; }
.menu tr.h35 { height: 35px; }
.menu tr.meal {
  height: 26px;
  font-size: 17px;
  line-height: 20px;
}
.menu .meal th {
  padding-bottom: 0;
}
.menu tr.fine {
  height: 15px;
  font-size: 10px;
  line-height: 12px;
}
.sum {
  font-weight: bold;
}
/* tight line spacing cuts whatever rises above the capitals */
.dish {
  clip-path: inset(2px 0 0 0);
  white-space: nowrap;
}
.fine .dish {
  clip-path: inset(1px 0 0 0);
}
.cut {
  height: 17px;
  margin-bottom: -2px;
  overflow: hidden;
}
u {
  text-decoration: underline wavy #d33 1px;
  text-decoration-skip-ink: none;
  text-underline-offset: 1px;
}

/* scroll bar */
.scrollbar {
  display: flex;
  flex-direction: column;
  align-items: center;
  background: linear-gradient(90deg, #d5d9df, #dfe4ec);
  padding-top: 2px;
}
.scrollbar > button {
  display: grid;
  place-items: center;
  height: 14px;
}
.track {
  flex: 1;
  width: 16px;
  padding-top: 30px;
}
.thumb {
  height: 55%;
  border: 1px solid #8a9098;
  background:
    repeating-linear-gradient(#7c828a 0 1px, transparent 1px 2px) center / 8px 7px no-repeat,
    linear-gradient(90deg, #f6f8fb, #d6dbe2);
}
.browse {
  display: flex;
  flex-direction: column;
  align-items: center;
  justify-content: space-around;
  width: 17px;
  height: 52px;
  border-top: 1px solid #b0b6c0;
}

/* status bar */
.status {
  display: flex;
  align-items: center;
  height: 21px;
  flex: none;
  background: linear-gradient(#eceeef, #d4d7da 50%, #b9bcc0);
  padding-right: 4px;
  white-space: nowrap;
}
.status > span {
  border-right: 1px solid #8f949a;
  box-shadow: 1px 0 #f4f5f6;
  line-height: 18px;
}
.pages {
  width: 106px;
  padding-left: 8px;
}
.words {
  width: 102px;
  padding-left: 9px;
}
.lang {
  display: flex;
  align-items: center;
  gap: 16px;
  width: 148px;
  padding-left: 8px;
}
.views {
  display: flex;
  align-items: center;
  margin-left: auto;
  padding-left: 4px;
  border-left: 1px solid #8f949a;
}
.views button {
  display: grid;
  place-items: center;
  width: 18px;
  height: 18px;
}
.views .on {
  border: 1px solid #c9972c;
  border-radius: 2px;
  background: #fbdc7c;
}
.percent {
  width: 40px;
  text-align: center;
}
.round {
  width: 16px;
  height: 16px;
  border: 1px solid #6d7278;
  border-radius: 50%;
  background: linear-gradient(#444, #444) center / 8px 2px no-repeat, #f5f6f7;
}
.plus {
  background: linear-gradient(#444, #444) center / 8px 2px no-repeat, linear-gradient(#444, #444) center / 2px 8px no-repeat, #f5f6f7;
}
#zoom {
  appearance: none;
  width: 100px;
  height: 14px;
  margin: 0;
  background: linear-gradient(#777c82, #777c82) center / 100% 1px no-repeat;
}
#zoom::-webkit-slider-thumb {
  appearance: none;
  width: 9px;
  height: 12px;
  border: 1px solid #6d7278;
  border-radius: 0 0 5px 5px;
  background: #f5f6f7;
}

/* taskbar */
.taskbar {
  display: flex;
  align-items: center;
  height: 40px;
  flex: none;
  border-top: 1px solid #4d5b6e;
  background: linear-gradient(90deg, #8292a8, #8496b0 70px, #a7c0dd 110px, #a7c0dd calc(100% - 280px), #8094ad calc(100% - 235px), #8094ad);
}
.start {
  margin: 0 12px 0 9px;
}
.grip {
  width: 9px;
  height: 31px;
  background: radial-gradient(#33425a 1px, transparent 1px) 0 0 / 3px 4px;
}
.apps {
  display: flex;
  flex: 1;
  gap: 2px;
  margin-left: 9px;
}
.app {
  display: grid;
  place-items: center;
  width: 60px;
  height: 39px;
}
.open {
  border: 1px solid #4b5b73;
  border-radius: 3px;
  background: linear-gradient(135deg, #d4dfee, #b1c5df 50%, #a8bfdc);
  box-shadow: inset 0 0 0 1px #dbe6f3;
}
.multi {
  padding-right: 6px;
  background: linear-gradient(#56667e, #56667e) right 4px top / 1px 100% no-repeat, linear-gradient(135deg, #d4dfee, #b1c5df 50%, #a8bfdc);
}
.current {
  background: linear-gradient(135deg, #f6f9fd, #dbe5f2 50%, #ccdaec);
}
.tray {
  display: flex;
  align-items: center;
  gap: 8px;
  color: #fff;
}
.kbd {
  width: 23px;
}
.clock {
  display: flex;
  flex-direction: column;
  align-items: center;
  width: 74px;
}
.desktop {
  width: 15px;
  height: 39px;
  margin-left: -8px;
  border: 1px solid #3d4b5f;
  background: linear-gradient(#8a9bb1, #55667d 50%, #7c8fa8);
}
```
